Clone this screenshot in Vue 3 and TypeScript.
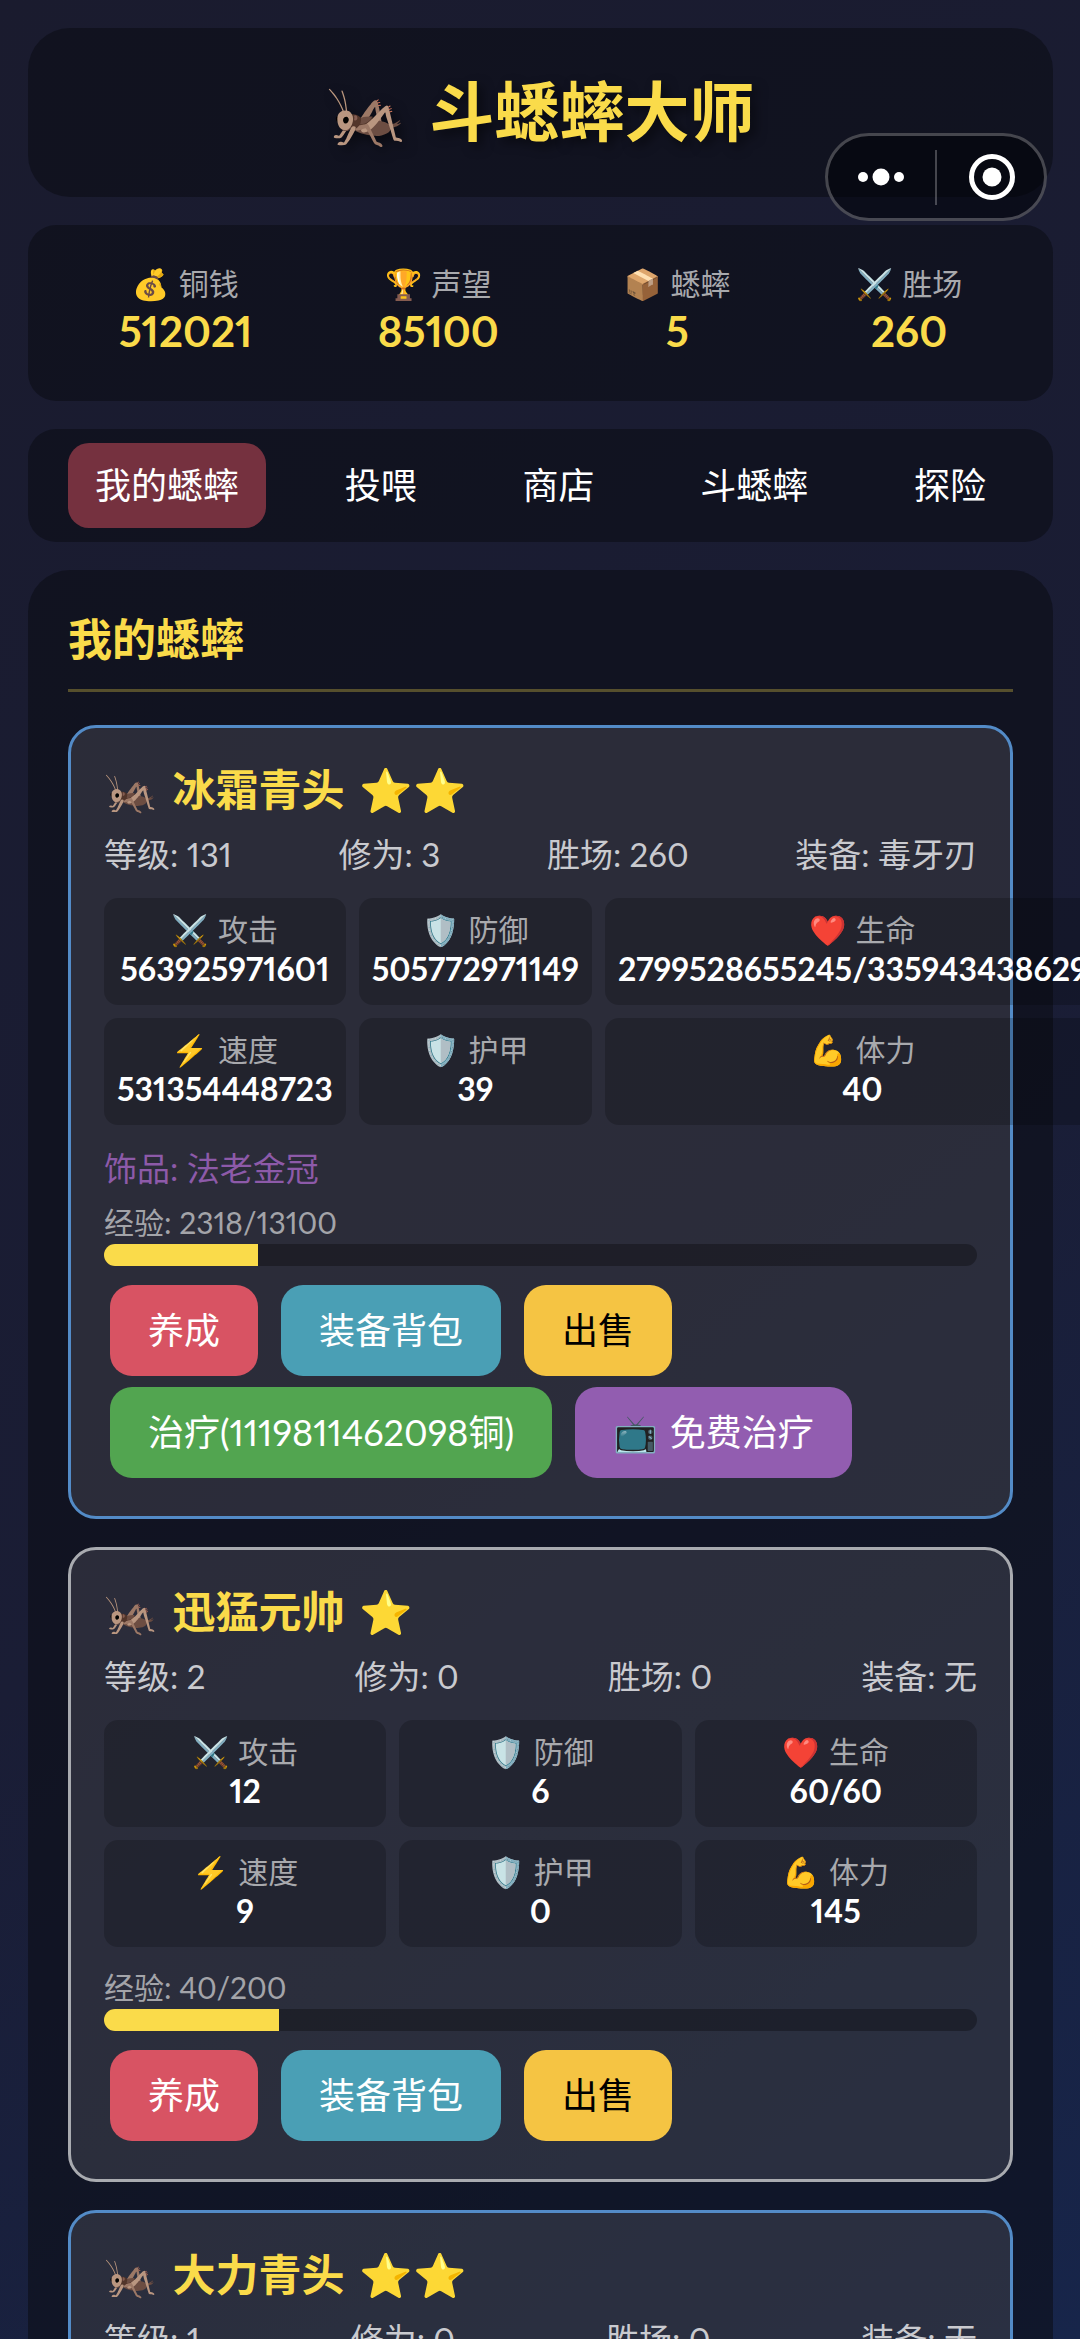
<script setup lang="ts">
import { computed, ref } from 'vue'

interface Cricket {
  name: string
  stars: number
  rarity: 'common' | 'rare'
  level: number
  realm: number
  wins: number
  weapon: string
  trinket?: string
  attack: number
  defense: number
  hp: number
  maxHp: number
  speed: number
  armor: number
  stamina: number
  exp: number
  maxExp: number
}

const tabs = ['我的蟋蟀', '投喂', '商店', '斗蟋蟀', '探险']
const activeTab = ref(tabs[0])

const crickets = ref<Cricket[]>([
  {
    name: '冰霜青头', stars: 2, rarity: 'rare', level: 131, realm: 3, wins: 260,
    weapon: '毒牙刃', trinket: '法老金冠', attack: 563925971601, defense: 505772971149,
    hp: 2799528655245, maxHp: 3359434386294, speed: 531354448723, armor: 39, stamina: 40,
    exp: 2318, maxExp: 13100,
  },
  {
    name: '迅猛元帅', stars: 1, rarity: 'common', level: 2, realm: 0, wins: 0,
    weapon: '无', attack: 12, defense: 6, hp: 60, maxHp: 60, speed: 9, armor: 0, stamina: 145,
    exp: 40, maxExp: 200,
  },
  {
    name: '大力青头', stars: 2, rarity: 'rare', level: 1, realm: 0, wins: 0,
    weapon: '无', attack: 10, defense: 5, hp: 50, maxHp: 50, speed: 8, armor: 0, stamina: 100,
    exp: 0, maxExp: 100,
  },
])

const resources = computed(() => [
  { icon: '💰', label: '铜钱', value: 512021 },
  { icon: '🏆', label: '声望', value: 85100 },
  { icon: '📦', label: '蟋蟀', value: 5 },
  { icon: '⚔️', label: '胜场', value: 260 },
])

function statsOf(c: Cricket) {
  return [
    { icon: '⚔️', label: '攻击', value: String(c.attack) },
    { icon: '🛡️', label: '防御', value: String(c.defense) },
    { icon: '❤️', label: '生命', value: `${c.hp}/${c.maxHp}` },
    { icon: '⚡', label: '速度', value: String(c.speed) },
    { icon: '🛡️', label: '护甲', value: String(c.armor) },
    { icon: '💪', label: '体力', value: String(c.stamina) },
  ]
}

// Healing costs two coins for each missing point of health.
function healCost(c: Cricket) {
  return (c.maxHp - c.hp) * 2
}
</script>

<template>
  <div class="app">
    <header class="panel header">
      <h1><span class="icon">🦗</span>斗蟋蟀大师</h1>
    </header>

    <section class="panel resources">
      <div v-for="r in resources" :key="r.label" class="resource">
        <div class="label"><span class="icon">{{ r.icon }}</span>{{ r.label }}</div>
        <div class="amount">{{ r.value }}</div>
      </div>
    </section>

    <nav class="panel tabs">
      <button
        v-for="t in tabs"
        :key="t"
        type="button"
        class="tab"
        :class="{ active: t === activeTab }"
        @click="activeTab = t"
      >{{ t }}</button>
    </nav>

    <main class="panel main">
      <h2>我的蟋蟀</h2>
      <article v-for="c in crickets" :key="c.name" class="card" :class="c.rarity">
        <h3><span class="icon">🦗</span>{{ c.name }}<span class="stars">{{ '⭐'.repeat(c.stars) }}</span></h3>
        <div class="info">
          <span>等级: {{ c.level }}</span>
          <span>修为: {{ c.realm }}</span>
          <span>胜场: {{ c.wins }}</span>
          <span>装备: {{ c.weapon }}</span>
        </div>
        <div class="stats">
          <div v-for="s in statsOf(c)" :key="s.label" class="stat">
            <div class="label"><span class="icon">{{ s.icon }}</span>{{ s.label }}</div>
            <div class="value">{{ s.value }}</div>
          </div>
        </div>
        <p v-if="c.trinket" class="trinket">饰品: {{ c.trinket }}</p>
        <p class="exp">经验: {{ c.exp }}/{{ c.maxExp }}</p>
        <div class="bar"><div class="fill" :style="{ width: (c.exp / c.maxExp) * 100 + '%' }"></div></div>
        <div class="actions">
          <button type="button" class="btn red">养成</button>
          <button type="button" class="btn teal">装备背包</button>
          <button type="button" class="btn amber">出售</button>
          <template v-if="healCost(c) > 0">
            <button type="button" class="btn green">治疗({{ healCost(c) }}铜)</button>
            <button type="button" class="btn purple"><span class="icon">📺</span>免费治疗</button>
          </template>
        </div>
      </article>
    </main>

    <div class="capsule">
      <button type="button" aria-label="更多">
        <svg width="50" height="20" viewBox="0 0 50 20" fill="#fff">
          <circle cx="6" cy="10" r="5" /><circle cx="24" cy="10" r="8.5" /><circle cx="42" cy="10" r="5" />
        </svg>
      </button>
      <i></i>
      <button type="button" aria-label="关闭">
        <svg width="48" height="48" viewBox="0 0 48 48">
          <circle cx="25" cy="24" r="20.5" fill="none" stroke="#fff" stroke-width="5" />
          <circle cx="25" cy="24" r="9.5" fill="#fff" />
        </svg>
      </button>
    </div>
  </div>
</template>

<style>
body {
  margin: 0;
  background: #1a1a2e;
}
</style>

<style scoped>
.app {
  box-sizing: border-box;
  height: 100vh;
  padding: 28px 27px 28px 28px;
  display: flex;
  flex-direction: column;
  gap: 28px;
  overflow-x: hidden;
  overflow-y: auto;
  scrollbar-width: none;
  background: linear-gradient(145deg, #1a1b2e 0%, #1a1d35 55%, #17254a 100%);
  color: #fff;
  font-family: Lato, 'Noto Sans CJK SC', 'Noto Color Emoji', sans-serif;
  font-variant-numeric: proportional-nums;
  font-size: 36px;
}

h1, h2, h3, p {
  margin: 0;
}

button {
  border: 0;
  margin: 0;
  font: inherit;
  font-variant-numeric: inherit;
  color: inherit;
  white-space: nowrap;
}

.panel {
  flex: none;
  background: rgba(10, 13, 20, 0.56);
  border-radius: 28px;
}

.header {
  padding: 41px 28px 44px;
  border-radius: 42px;
}

h1 {
  font-size: 65px;
  line-height: 84px;
  text-align: center;
  color: #fadb4a;
  text-shadow: 5px 5px 11px rgba(0, 0, 0, 0.5);
}

h1 .icon {
  margin-right: 22px;
}

.resources {
  display: flex;
  justify-content: space-around;
  padding: 39px 28px 41px;
}

.resource {
  text-align: center;
}

.label {
  font-size: 30px;
  line-height: 34px;
  color: #a8a9ad;
  white-space: nowrap;
}

.label .icon {
  margin-right: 9px;
}

.resource .label {
  line-height: 38px;
}

.amount {
  font-size: 42px;
  font-weight: 700;
  line-height: 58px;
  color: #fadb4a;
}

.tabs {
  display: flex;
  justify-content: space-around;
  padding: 14px;
}

.tab {
  padding: 0 27px;
  line-height: 85px;
  border-radius: 21px;
  background: transparent;
}

.tab.active {
  background: #75313f;
}

.main {
  padding: 39px 40px 40px;
  border-radius: 42px;
}

h2 {
  margin-bottom: 33px;
  padding-bottom: 20px;
  border-bottom: 3px solid rgba(250, 219, 74, 0.3);
  font-size: 44px;
  line-height: 60px;
  color: #fadb4a;
}

.card {
  margin-bottom: 28px;
  padding: 33px 33px 38px;
  border: 3px solid #a9abb0;
  border-radius: 28px;
  background: rgba(255, 255, 255, 0.11);
}

.card.rare {
  border-color: #538bc7;
}

h3 {
  margin-bottom: 15px;
  font-size: 43px;
  line-height: 57px;
  color: #fadb4a;
}

h3 .icon {
  margin-right: 15px;
}

h3 .stars {
  margin-left: 15px;
}

.info {
  display: flex;
  justify-content: space-between;
  margin-bottom: 23px;
  font-size: 33px;
  line-height: 42px;
  color: #c9cacf;
}

.stats {
  display: grid;
  grid-template-columns: repeat(3, 1fr);
  gap: 13px;
  margin-bottom: 22px;
}

.stat {
  padding: 14px 13px;
  border-radius: 14px;
  background: rgba(0, 0, 0, 0.2);
  text-align: center;
}

.stat .value {
  font-size: 32px;
  font-weight: 700;
  line-height: 45px;
}

.trinket {
  margin-bottom: 15px;
  font-size: 33px;
  line-height: 42px;
  color: #8d5aa9;
}

.exp {
  padding-bottom: 4px;
  font-size: 30px;
  line-height: 36px;
  color: #a3a4a9;
}

.bar {
  height: 22px;
  border-radius: 11px;
  background: rgba(0, 0, 0, 0.3);
  overflow: hidden;
}

.fill {
  height: 100%;
  background: #fadb4a;
}

.actions {
  display: flex;
  flex-wrap: wrap;
  gap: 11px 23px;
  padding: 19px 6px 0;
}

.btn {
  padding: 0 38px;
  line-height: 91px;
  border-radius: 22px;
}

.btn .icon {
  margin-right: 12px;
}

.red {
  background: #d85363;
}

.teal {
  background: #4a9fb5;
}

.amber {
  background: #f5c443;
  color: #000;
}

.green {
  background: #52a550;
}

.purple {
  background: #925db0;
}

.capsule {
  position: absolute;
  top: 133px;
  right: 33px;
  box-sizing: border-box;
  width: 222px;
  height: 88px;
  display: flex;
  align-items: center;
  border: 3px solid rgba(255, 255, 255, 0.25);
  border-radius: 44px;
  background: rgba(0, 2, 8, 0.55);
}

.capsule button {
  flex: 1;
  display: flex;
  justify-content: center;
  padding: 0;
  background: none;
}

.capsule i {
  width: 2px;
  height: 55px;
  background: rgba(255, 255, 255, 0.25);
}
</style>
